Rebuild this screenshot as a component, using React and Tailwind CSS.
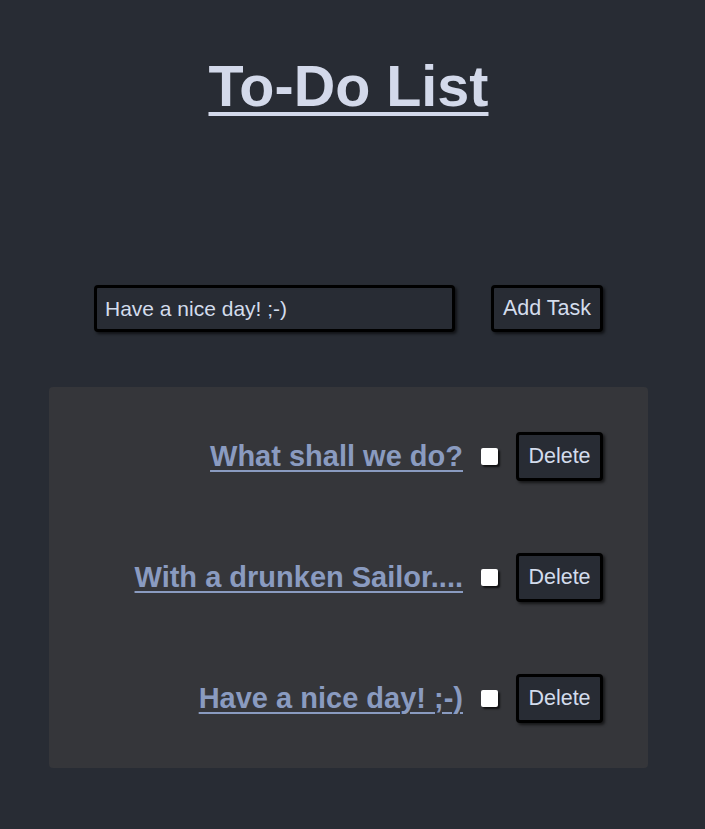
import { useState } from "react";

const initialTasks = [
  { id: 1, text: "What shall we do?", done: false },
  { id: 2, text: "With a drunken Sailor....", done: false },
  { id: 3, text: "Have a nice day! ;-)", done: false },
];

export default function App() {
  const [tasks, setTasks] = useState(initialTasks);
  const [value, setValue] = useState("Have a nice day! ;-)");

  const addTask = () => {
    if (!value.trim()) return;
    setTasks([...tasks, { id: Date.now(), text: value, done: false }]);
  };

  return (
    <div
      className="min-h-[829px] bg-[#282c34] text-[#d3d9ea]"
      style={{ fontFamily: '"Liberation Sans", Arial, sans-serif' }}
    >
      <div className="w-[697px] flex flex-col items-center">
        <h1 className="mt-[54px] text-[57.5px] leading-[64px] font-bold underline decoration-[4px] underline-offset-[6px] text-[#d3d9ea]">
          To-Do List
        </h1>

        <div className="mt-[167px] flex items-center gap-[36px]">
          <input
            value={value}
            onChange={(e) => setValue(e.target.value)}
            className="w-[361px] h-[47px] px-[8px] bg-[#282c34] border-[3px] border-black rounded-[4px] shadow-[2px_2px_3px_rgba(0,0,0,0.6)] text-[21px] text-[#d3dcec] outline-none"
          />
          <button
            onClick={addTask}
            className="w-[112px] h-[47px] bg-[#282c34] border-[3px] border-black rounded-[4px] shadow-[2px_2px_3px_rgba(0,0,0,0.6)] text-[21.5px] text-[#d3dcec]"
          >
            Add Task
          </button>
        </div>

        <div className="mt-[55px] w-[599px] bg-[#35363a] rounded-[4px] pt-[45px] pb-[45px] pr-[45px] flex flex-col items-end gap-[72px]">
          {tasks.map((t) => (
            <div key={t.id} className="flex items-center h-[49px]">
              <span className="text-[29px] font-bold underline decoration-[2px] underline-offset-[4px] text-[#8a9bc0]">
                {t.text}
              </span>
              <input
                type="checkbox"
                checked={t.done}
                onChange={() =>
                  setTasks(tasks.map((x) => (x.id === t.id ? { ...x, done: !x.done } : x)))
                }
                className="ml-[18px] appearance-none w-[17px] h-[17px] bg-white rounded-[2px] shadow-[2px_2px_2px_rgba(0,0,0,0.7)] checked:bg-[#8a9bc0]"
              />
              <button
                onClick={() => setTasks(tasks.filter((x) => x.id !== t.id))}
                className="ml-[18px] w-[87px] h-[49px] bg-[#282c34] border-[3px] border-black rounded-[4px] shadow-[2px_2px_3px_rgba(0,0,0,0.6)] text-[21.5px] text-[#d3dcec]"
              >
                Delete
              </button>
            </div>
          ))}
        </div>
      </div>
    </div>
  );
}
